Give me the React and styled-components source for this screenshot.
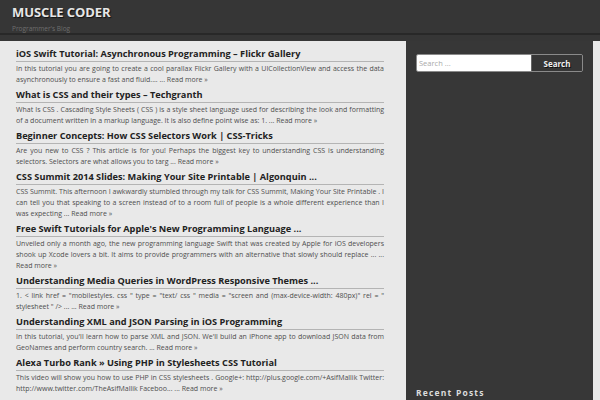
import React from "react";
import styled, { createGlobalStyle } from "styled-components";

const Global = createGlobalStyle`
  html, body { margin: 0; padding: 0; }
  body {
    background: #363636;
    font-family: "Open Sans", "DejaVu Sans", sans-serif;
    width: 600px;
    height: 400px;
    overflow: hidden;
  }
`;

const Header = styled.header`
  height: 35px;
  background: #363636;
  border-bottom: 2px solid #282828;
  padding: 4px 12px 0;
  box-sizing: border-box;
`;

const SiteTitle = styled.h1`
  margin: 0;
  font-size: 13px;
  line-height: 16px;
  font-weight: 700;
  color: #e6e6e6;
  letter-spacing: -0.1px;
  text-shadow: 1px 1px 1px #111;
`;

const Tagline = styled.div`
  font-size: 6.5px;
  line-height: 8px;
  color: #6e6e6e;
  margin-top: 5px;
`;

const Layout = styled.div`
  display: flex;
  margin-top: 6px;
  align-items: flex-start;
`;

const Main = styled.main`
  width: 406px;
  height: 360px;
  flex: none;
  background: #e9e9e9;
  padding: 6px 22px 0 16px;
  box-sizing: border-box;
  overflow: hidden;
`;

const Sidebar = styled.aside`
  width: 187px;
  flex: none;
  height: 360px;
  background: #373737;
  padding: 13px 10px 0 10px;
  box-sizing: border-box;
  display: flex;
  flex-direction: column;
`;

const RightStrip = styled.div`
  flex: 1;
  height: 360px;
  background: #e9e9e9;
`;

const Post = styled.article`
  margin-bottom: 3px;
`;

const PostTitle = styled.h2`
  margin: 0;
  font-size: 9.2px;
  line-height: 14px;
  font-weight: 700;
  color: #222;
  padding-bottom: 0;
  border-bottom: 1px solid #b4b4b4;
  white-space: nowrap;
`;

const Excerpt = styled.p`
  margin: 1px 0 0;
  font-size: 7px;
  line-height: 11px;
  color: #4e4e4e;
  text-align: justify;
`;

const More = styled.a`
  color: #4e4e4e;
  text-decoration: none;
`;

const SearchForm = styled.form`
  display: flex;
  width: 167px;
  height: 18px;
  border: 1px solid #8a8a8a;
  border-radius: 2px;
  box-sizing: border-box;
  overflow: hidden;
`;

const SearchInput = styled.input`
  flex: 1;
  min-width: 0;
  border: none;
  background: #fff;
  padding: 0 2px;
  font-family: "Open Sans", sans-serif;
  font-size: 7.5px;
  outline: none;
  &::placeholder { color: #aaa; }
`;

const SearchButton = styled.button`
  width: 51px;
  border: none;
  border-left: 1px solid #666;
  background: #363636;
  color: #f0f0f0;
  font-family: "Open Sans", sans-serif;
  font-weight: 700;
  font-size: 8px;
  padding: 0;
  text-shadow: 1px 1px 0 #111;
`;

const WidgetTitle = styled.h3`
  margin: auto 0 0;
  padding-bottom: 2px;
  font-size: 8.5px;
  font-weight: 700;
  letter-spacing: 1.2px;
  color: #dcdcdc;
  line-height: 12px;
`;

const posts = [
  {
    title: "iOS Swift Tutorial: Asynchronous Programming – Flickr Gallery",
    text: "In this tutorial you are going to create a cool parallax Flickr Gallery with a UICollectionView and access the data asynchronously to ensure a fast and fluid.... ...",
  },
  {
    title: "What is CSS and their types – Techgranth",
    text: "What Is CSS . Cascading Style Sheets ( CSS ) is a style sheet language used for describing the look and formatting of a document written in a markup language. It is also define point wise as: 1. ...",
  },
  {
    title: "Beginner Concepts: How CSS Selectors Work | CSS-Tricks",
    text: "Are you new to CSS ? This article is for you! Perhaps the biggest key to understanding CSS is understanding selectors. Selectors are what allows you to targ ...",
  },
  {
    title: "CSS Summit 2014 Slides: Making Your Site Printable | Algonquin ...",
    text: "CSS Summit. This afternoon I awkwardly stumbled through my talk for CSS Summit, Making Your Site Printable . I can tell you that speaking to a screen instead of to a room full of people is a whole different experience than I was expecting ...",
  },
  {
    title: "Free Swift Tutorials for Apple's New Programming Language ...",
    text: "Unveiled only a month ago, the new programming language Swift that was created by Apple for iOS developers shook up Xcode lovers a bit. It aims to provide programmers with an alternative that slowly should replace ... ...",
  },
  {
    title: "Understanding Media Queries in WordPress Responsive Themes ...",
    text: "1. < link href = \"mobilestyles. css \" type = \"text/ css \" media = \"screen and (max-device-width: 480px)\" rel = \" stylesheet \" /> ... ...",
  },
  {
    title: "Understanding XML and JSON Parsing in iOS Programming",
    text: "In this tutorial, you'll learn how to parse XML and JSON. We'll build an iPhone app to download JSON data from GeoNames and perform country search. ...",
  },
  {
    title: "Alexa Turbo Rank » Using PHP in Stylesheets CSS Tutorial",
    text: "This video will show you how to use PHP in CSS stylesheets . Google+: http://plus.google.com/+AsifMallik Twitter: http://www.twitter.com/TheAsifMallik Faceboo... ...",
  },
];

export default function App() {
  return (
    <>
      <Global />
      <Header>
        <SiteTitle>MUSCLE CODER</SiteTitle>
        <Tagline>Programmer's Blog</Tagline>
      </Header>
      <Layout>
        <Main>
          {posts.map((p) => (
            <Post key={p.title}>
              <PostTitle>{p.title}</PostTitle>
              <Excerpt>
                {p.text} <More href="#">Read more »</More>
              </Excerpt>
            </Post>
          ))}
        </Main>
        <Sidebar>
          <SearchForm onSubmit={(e) => e.preventDefault()}>
            <SearchInput placeholder="Search ..." />
            <SearchButton type="submit">Search</SearchButton>
          </SearchForm>
          <WidgetTitle>Recent Posts</WidgetTitle>
        </Sidebar>
        <RightStrip />
      </Layout>
    </>
  );
}
